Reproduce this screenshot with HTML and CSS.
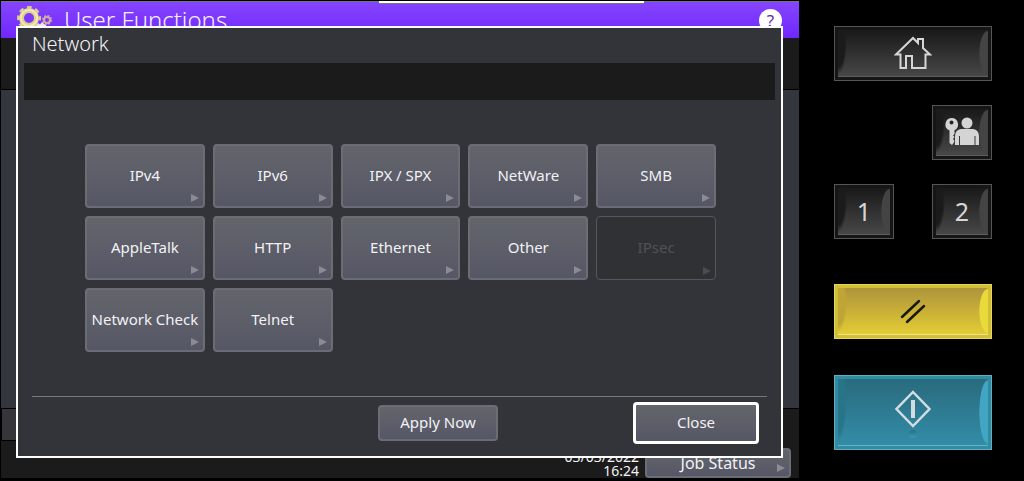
FILE: index.html
```
<!DOCTYPE html>
<html lang="en">
<head>
  <meta charset="UTF-8" />
  <meta name="viewport" content="width=device-width, initial-scale=1.0"/>
  <title>User Functions - Network</title>
  <link rel="stylesheet" href="styles.css">
</head>
<body>

<div class="panel">
  <div class="screen">
    <header class="topbar">
      <svg class="gears" width="38" height="28" viewBox="0 0 38 28">
        <circle cx="13" cy="12" r="7.500" fill="none" stroke="#ddd08c" stroke-width="5"/>
        <circle cx="13" cy="12" r="10.500" fill="none" stroke="#ddd08c" stroke-width="3" stroke-dasharray="4.600 3.650" stroke-dashoffset="2.300"/>
        <circle cx="13" cy="12" r="8" fill="none" stroke="#f1e9b8" stroke-width="2"/>
        <path d="M21 22L22 17L24 18.500L26 16L28 18L30 19V22Z" fill="#eceaf0"/>
        <circle cx="31" cy="14" r="3" fill="none" stroke="#d3a9a4" stroke-width="2"/>
        <circle cx="31" cy="14" r="4" fill="none" stroke="#d3a9a4" stroke-width="2" stroke-dasharray="1.8 1.34"/>
      </svg>
      <h1>User Functions</h1>
      <button class="help" aria-label="Help">?</button>
    </header>
    <div class="strip"></div>
    <div class="content"></div>
    <div class="tabs"><div class="tab"></div></div>
    <footer class="statusbar">
      <p class="clock">03/03/2022<br>16:24</p>
      <button class="btn job">Job Status</button>
    </footer>

    <!-- Marker at the top edge of the display -->
    <div class="handle"></div>

    <section class="dialog" role="dialog" aria-labelledby="dialogTitle">
      <h2 id="dialogTitle">Network</h2>
      <div class="message"></div>
      <div class="options">
        <button class="btn">IPv4</button>
        <button class="btn">IPv6</button>
        <button class="btn">IPX / SPX</button>
        <button class="btn">NetWare</button>
        <button class="btn">SMB</button>
        <button class="btn">AppleTalk</button>
        <button class="btn">HTTP</button>
        <button class="btn">Ethernet</button>
        <button class="btn">Other</button>
        <button class="btn" disabled>IPsec</button>
        <button class="btn">Network Check</button>
        <button class="btn">Telnet</button>
      </div>
      <div class="actions">
        <button class="btn plain apply">Apply Now</button>
        <button class="btn plain close">Close</button>
      </div>
    </section>
  </div>

  <!-- Hardware keys -->
  <aside class="keypad">
    <button class="key wide" aria-label="Home">
      <span class="face">
        <svg width="38" height="34" viewBox="0 0 38 34" fill="none" stroke="#d6d6d6" stroke-width="2">
          <path d="M2 18.500L19 2L24 7V3H29V12L36 18.500H31.500V32H18V20H12V32H6.500V18.500Z"/>
        </svg>
      </span>
    </button>
    <button class="key user" aria-label="Access">
      <span class="face">
        <svg width="36" height="30" viewBox="0 0 36 30" fill="#d4d4d4">
          <path fill-rule="evenodd" d="M7.500 1A6.500 6.500 0 0 1 10.500 13.300V17L9 18.500L10.500 20L9 22L10.500 24L9.500 26L8 28L5.500 26V13.500A6.500 6.500 0 0 1 7.500 1ZM7.500 3.500a2 2 0 1 0 0 4 2 2 0 0 0 0-4Z"/>
          <circle cx="23" cy="6" r="5.500"/>
          <path d="M11 28V19Q11 13 17 12H29Q35 13 35 19V28H31.500V19H30.500V28H16V19H15V28Z"/>
        </svg>
      </span>
    </button>
    <button class="key"><span class="face">1</span></button>
    <button class="key"><span class="face">2</span></button>
    <button class="key wide reset" aria-label="Reset">
      <span class="face">
        <svg width="28" height="28" viewBox="0 0 28 28" stroke="#1c1a10" stroke-width="2.500" stroke-linecap="round">
          <path d="M3 20L20 4M8 25L25 9"/>
        </svg>
      </span>
    </button>
    <button class="key wide start" aria-label="Start">
      <span class="face">
        <svg width="38" height="38" viewBox="0 0 38 38" fill="none">
          <path d="M19 2L35.500 19L19 36L2.500 19Z" stroke="#d3dde0" stroke-width="2.500"/>
          <path d="M19 10V28" stroke="#d3dde0" stroke-width="4"/>
        </svg>
        <i class="lamp"></i>
      </span>
    </button>
  </aside>
</div>

</body>
</html>
```
FILE: styles.css
```
* {
  box-sizing: border-box;
}

body {
  margin: 0;
  background: #000;
  color: #f2f2f4;
  font-family: 'Noto Sans', sans-serif;
  font-size: 15px;
}

h1, h2, p {
  margin: 0;
  font-weight: normal;
}

button {
  font-family: inherit;
  cursor: pointer;
}

.panel {
  display: grid;
  grid-template-columns: 1fr 225px;
  min-height: 100vh;
}

.screen {
  position: relative;
  display: flex;
  flex-direction: column;
  padding: 1px 0 3px 1px;
}

.topbar {
  display: flex;
  align-items: flex-start;
  height: 37px;
  padding: 4px 17px 0 15px;
  border-top: 1px solid #777;
  background: linear-gradient(#8545ff, #7027fb);
}

.gears {
  flex: none;
}

.topbar h1 {
  flex: 1;
  margin-left: 10px;
  font-size: 24px;
  font-weight: 300;
  line-height: 28px;
}

.help {
  width: 23px;
  height: 23px;
  margin-top: 3px;
  padding: 0;
  border: none;
  border-radius: 50%;
  background: #fff;
  color: #5b2ca8;
  font-size: 17px;
  line-height: 20px;
}

.strip {
  height: 52px;
  border-bottom: 1px solid #000;
  background: #1b1b1b;
}

.content {
  flex: 1;
  background: #33363d;
}

.tabs {
  height: 33px;
  border-top: 1px solid #000;
  background: #1b1b1b;
}

.tab {
  width: 120px;
  height: 32px;
  border: 1px solid #000;
  border-top: none;
  background: #35353a;
}

.statusbar {
  display: flex;
  justify-content: flex-end;
  align-items: flex-end;
  gap: 6px;
  height: 37px;
  padding-right: 8px;
  background: #1b1b1b;
}

.clock {
  font-size: 14px;
  line-height: 14px;
  text-align: right;
}

.handle {
  position: absolute;
  top: 1px;
  left: 379px;
  right: 155px;
  height: 3px;
  border-bottom: 1px solid #777;
  background: #fff;
}

.dialog {
  position: absolute;
  top: 26px;
  right: 16px;
  bottom: 23px;
  left: 16px;
  display: flex;
  flex-direction: column;
  border: 2px solid #fff;
  background: #323439;
}

.dialog h2 {
  padding: 4px 14px 7px;
  font-size: 20px;
  font-weight: 300;
  line-height: 24px;
}

.message {
  height: 37px;
  margin: 0 6px;
  background: #1b1b1b;
}

.options {
  display: grid;
  grid-template-columns: repeat(5, 1fr);
  grid-auto-rows: 64px;
  gap: 8px;
  flex: 1;
  padding: 44px 65px 0 67px;
}

.btn {
  position: relative;
  padding: 0 0 2px;
  border: 2px solid #6b6d75;
  border-radius: 4px;
  background: linear-gradient(#63656b, #565766);
  color: #f2f2f6;
  font-size: 15px;
}

/* submenu arrow */
.btn::after {
  content: "";
  position: absolute;
  right: 4px;
  bottom: 4px;
  border-left: 8px solid #8a8b95;
  border-top: 4px solid transparent;
  border-bottom: 4px solid transparent;
}

.btn:disabled {
  border: 1px solid #55565a;
  background: #303135;
  color: #505156;
  cursor: default;
}

.btn:disabled::after {
  border-left-color: #4b4c51;
}

.plain::after {
  display: none;
}

.job {
  width: 146px;
  height: 30px;
  padding: 0;
  font-size: 16px;
}

.actions {
  display: flex;
  justify-content: flex-end;
  align-items: center;
  gap: 135px;
  margin: 0 14px;
  padding: 5px 8px 12px 0;
  border-top: 1px solid #76777c;
}

.apply {
  width: 120px;
  height: 36px;
}

.close {
  width: 126px;
  height: 42px;
  border: 3px solid #fff;
}

.keypad {
  display: grid;
  grid-template-columns: 60px 60px;
  grid-template-rows: 55px 55px 55px 76px 87px;
  justify-content: space-between;
  align-content: start;
  align-items: end;
  row-gap: 24px;
  padding: 26px 32px 0 35px;
}

.key {
  --edge: #555;
  --rim: #161616;
  --top: #191919;
  --bottom: #474747;
  --shade: #1b1b1b;
  --shine: #444;
  --line: #5e5e5e;
  display: flex;
  height: 55px;
  padding: 3px;
  border: 1px solid var(--edge);
  background: var(--rim);
  color: #d6d6d6;
}

.wide {
  grid-column: 1 / 3;
}

.user {
  grid-column: 2;
}

.face {
  position: relative;
  flex: 1;
  align-self: stretch;
  display: flex;
  align-items: center;
  justify-content: center;
  border-bottom: 1px solid var(--line);
  background:
    radial-gradient(ellipse 9px 50% at 100% 50%, var(--shine) 92%, transparent),
    radial-gradient(ellipse 9px 66% at 0 30%, var(--shade) 75%, transparent),
    linear-gradient(var(--top), var(--bottom));
  font-size: 25px;
}

.reset {
  --edge: #e3d567;
  --rim: #d3bf32;
  --top: #ae943b;
  --bottom: #e3cc35;
  --shade: #bfa436;
  --shine: #ead93b;
  --line: #f0e28a;
}

.start {
  --edge: #63afbf;
  --rim: #318ba1;
  --top: #296b7e;
  --bottom: #338ca7;
  --shade: #287489;
  --shine: #42a5c3;
  --line: #5eb7cd;
  height: 75px;
}

.start .face {
  padding-bottom: 6px;
}

.lamp {
  position: absolute;
  bottom: 7px;
  left: 50%;
  width: 8px;
  height: 8px;
  margin-left: -4px;
  border-radius: 50%;
  background: linear-gradient(#257087, #3b9ab6);
}
```
